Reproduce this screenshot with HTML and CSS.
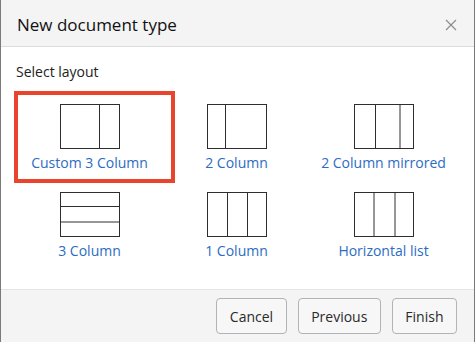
FILE: index.html
```html
<!DOCTYPE html>
<html lang="en">
<head>
  <meta charset="UTF-8" />
  <title>New document type</title>
  <link rel="stylesheet" href="styles.css">
</head>
<body>
  <div class="dialog">
    <div class="header">
      <div class="title">New document type</div>
      <svg class="close" width="12" height="12" viewBox="0 0 12 12">
        <path d="M1 1 L11 11 M11 1 L1 11" stroke="#8a8a8a" stroke-width="1.1" fill="none" />
      </svg>
    </div>

    <div class="body">
      <div class="section-label">Select layout</div>

      <div class="layouts">
        <div class="layout selected">
          <svg class="icon" width="60" height="45" viewBox="0 0 60 45">
            <rect x="0.5" y="0.5" width="59" height="44" />
            <line x1="39.5" y1="0.5" x2="39.5" y2="44.5" />
          </svg>
          <div class="name">Custom 3 Column</div>
        </div>
        <div class="layout">
          <svg class="icon" width="60" height="45" viewBox="0 0 60 45">
            <rect x="0.5" y="0.5" width="59" height="44" />
            <line x1="18.5" y1="0.5" x2="18.5" y2="44.5" />
          </svg>
          <div class="name">2 Column</div>
        </div>
        <div class="layout">
          <svg class="icon" width="60" height="45" viewBox="0 0 60 45">
            <rect x="0.5" y="0.5" width="59" height="44" />
            <line x1="21.5" y1="0.5" x2="21.5" y2="44.5" />
            <line x1="46" y1="0.5" x2="46" y2="44.5" />
          </svg>
          <div class="name">2 Column mirrored</div>
        </div>
        <div class="layout">
          <svg class="icon" width="60" height="45" viewBox="0 0 60 45">
            <rect x="0.5" y="0.5" width="59" height="44" />
            <line x1="0.5" y1="14.5" x2="59.5" y2="14.5" />
            <line x1="0.5" y1="30" x2="59.5" y2="30" />
          </svg>
          <div class="name">3 Column</div>
        </div>
        <div class="layout">
          <svg class="icon" width="60" height="45" viewBox="0 0 60 45">
            <rect x="0.5" y="0.5" width="59" height="44" />
            <line x1="20.5" y1="0.5" x2="20.5" y2="44.5" />
            <line x1="40.5" y1="0.5" x2="40.5" y2="44.5" />
          </svg>
          <div class="name">1 Column</div>
        </div>
        <div class="layout">
          <svg class="icon" width="60" height="45" viewBox="0 0 60 45">
            <rect x="0.5" y="0.5" width="59" height="44" />
            <line x1="20" y1="0.5" x2="20" y2="44.5" />
            <line x1="41" y1="0.5" x2="41" y2="44.5" />
          </svg>
          <div class="name">Horizontal list</div>
        </div>
      </div>
    </div>

    <div class="footer">
      <button>Cancel</button>
      <button>Previous</button>
      <button>Finish</button>
    </div>
  </div>
</body>
</html>
```

FILE: styles.css
```css
* {
  box-sizing: border-box;
}

body {
  margin: 0;
  font-family: 'Open Sans', 'Noto Sans', sans-serif;
  background: #ffffff;
}

.dialog {
  width: 475px;
  height: 342px;
  display: flex;
  flex-direction: column;
  border-left: 1px solid #7a7a7a;
  border-right: 1px solid #7a7a7a;
  background: #ffffff;
}

.header {
  height: 47px;
  flex: none;
  display: flex;
  align-items: center;
  justify-content: space-between;
  padding: 2px 17px 0 16px;
  background: #f4f4f4;
  border-bottom: 1px solid #dcdcdc;
}

.title {
  font-size: 17px;
  font-weight: 500;
  color: #111;
}

.close {
  display: block;
  margin-top: 1px;
}

.body {
  flex: 1;
  padding: 15px 16px 0 15px;
}

.section-label {
  font-size: 14px;
  line-height: 20px;
  color: #222;
}

.layouts {
  display: grid;
  grid-template-columns: repeat(3, 147px);
  row-gap: 19px;
  margin-top: 22px;
}

.layout {
  position: relative;
  display: flex;
  flex-direction: column;
  align-items: center;
}

.layout.selected::after {
  content: "";
  position: absolute;
  left: -2px;
  right: -12px;
  top: -13px;
  bottom: -10px;
  border: 4px solid #e8452c;
}

.icon {
  display: block;
}

.icon rect,
.icon line {
  fill: none;
  stroke: #2e2e2e;
  stroke-width: 1;
}

.name {
  margin-top: 4px;
  font-size: 14px;
  line-height: 20px;
  color: #2b6cc4;
  white-space: nowrap;
}

.footer {
  height: 53px;
  flex: none;
  display: flex;
  justify-content: flex-end;
  gap: 11px;
  padding: 8px 17px 0 16px;
  background: #f4f4f4;
  border-top: 1px solid #e4e4e4;
}

button {
  height: 36px;
  padding: 0 12.5px;
  font-family: inherit;
  font-size: 14px;
  color: #2a2a2a;
  background: #f7f7f7;
  border: 1px solid #b3b3b3;
  border-radius: 4px;
}
```
